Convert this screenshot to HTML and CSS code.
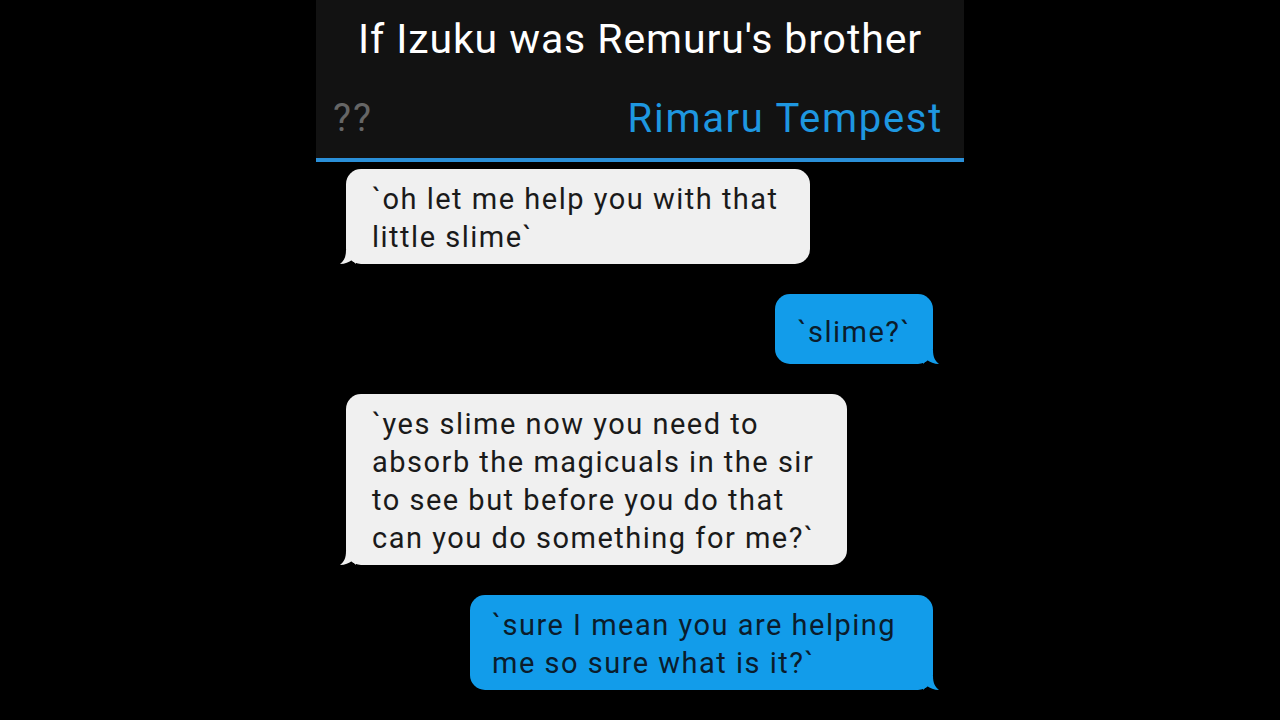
FILE: index.html
```html
<!DOCTYPE html>
<html>

<head>
    <title>If Izuku was Remuru's brother</title>
    <link rel="stylesheet" href="styles.css">
</head>

<body>
    <div class="screen">
        <div class="header">
            <div class="title">If Izuku was Remuru's brother</div>
            <div class="names">
                <span class="name-left">??</span>
                <span class="name-right">Rimaru Tempest</span>
            </div>
        </div>

        <div class="chat">
            <div class="msg msg-left">
                <div class="bubble gray w1">`oh let me help you with that little slime`
                    <svg class="tail tail-left" width="16" height="14" viewBox="0 0 16 14"><path d="M6 0 C6 7 4 11 0 14 C5 14 9 12 12 10 L16 14 L16 0 Z" fill="#f0f0f0"/></svg>
                </div>
            </div>

            <div class="msg msg-right">
                <div class="bubble blue single">`slime?`
                    <svg class="tail tail-right" width="16" height="14" viewBox="0 0 16 14"><path d="M10 0 C10 7 12 11 16 14 C11 14 7 12 4 10 L0 14 L0 0 Z" fill="#129cea"/></svg>
                </div>
            </div>

            <div class="msg msg-left">
                <div class="bubble gray w3">`yes slime now you need to absorb the magicuals in the sir to see but before you do that can you do something for me?`
                    <svg class="tail tail-left" width="16" height="14" viewBox="0 0 16 14"><path d="M6 0 C6 7 4 11 0 14 C5 14 9 12 12 10 L16 14 L16 0 Z" fill="#f0f0f0"/></svg>
                </div>
            </div>

            <div class="msg msg-right">
                <div class="bubble blue w4">`sure I mean you are helping me so sure what is it?`
                    <svg class="tail tail-right" width="16" height="14" viewBox="0 0 16 14"><path d="M10 0 C10 7 12 11 16 14 C11 14 7 12 4 10 L0 14 L0 0 Z" fill="#129cea"/></svg>
                </div>
            </div>
        </div>
    </div>
</body>

</html>
```

FILE: styles.css
```css
body {
    margin: 0;
    padding: 0;
    background-color: #000;
    font-family: Roboto, "Liberation Sans", sans-serif;
}

.screen {
    width: 648px;
    height: 720px;
    margin: 0 auto;
    overflow: hidden;
}

/* header with title and names */
.header {
    background-color: #121212;
    border-bottom: 4px solid #2a8fd8;
}

.title {
    color: #fff;
    font-size: 41px;
    letter-spacing: 0.9px;
    text-align: center;
    height: 78px;
    line-height: 78px;
}

.names {
    display: flex;
    justify-content: space-between;
    align-items: center;
    height: 80px;
    padding: 0 21px 0 17px;
}

.name-left {
    color: #666;
    font-size: 38px;
    letter-spacing: 2px;
}

.name-right {
    color: #1e97e0;
    font-size: 40px;
    letter-spacing: 1.7px;
}

/* chat */
.chat {
    display: flex;
    flex-direction: column;
    gap: 30px;
    padding: 7px 31px 0 30px;
}

.msg {
    display: flex;
}

.msg-left {
    justify-content: flex-start;
}

.msg-right {
    justify-content: flex-end;
}

.bubble {
    position: relative;
    font-size: 29px;
    letter-spacing: 1.5px;
    line-height: 38px;
    padding: 11px 16px 8px 26px;
    border-radius: 15px;
    box-sizing: border-box;
}

.gray {
    background-color: #f0f0f0;
    color: #1a1a1a;
}

.blue {
    background-color: #129cea;
    color: #0b1c2c;
}

.w1 {
    width: 464px;
}

.w3 {
    width: 501px;
}

.w4 {
    width: 463px;
    padding-left: 22px;
}

.single {
    padding: 19px 22px 13px 22px;
}

.tail {
    position: absolute;
    bottom: 0;
}

.tail-left {
    left: -6px;
}

.tail-right {
    right: -6px;
}
```
